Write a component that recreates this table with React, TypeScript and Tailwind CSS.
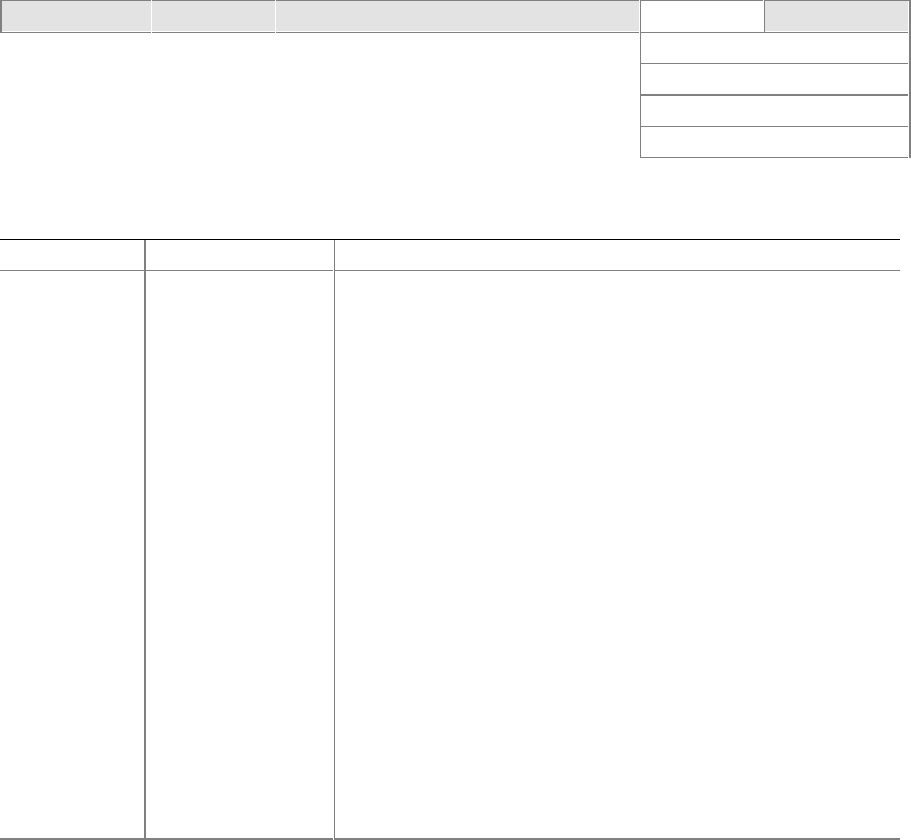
import React from 'react'

const gray = 'border-[#808080]'

function TabCell({ className, children }: { className: string; children?: React.ReactNode }) {
  return (
    <div className={`border-y ${gray} bg-white pb-px ${className}`}>
      <div className="h-[30px] bg-[#e3e3e3]">{children}</div>
    </div>
  )
}

function Column({ className }: { className: string }) {
  return (
    <div className={`flex flex-col ${className}`}>
      <div className={`h-[31px] border-b ${gray}`} />
      <div className={`h-[569px] border-b-2 ${gray}`} />
    </div>
  )
}

export default function App() {
  return (
    <div className="relative h-[840px] w-[911px] bg-white font-['Liberation_Sans',sans-serif]">
      {/* tab bar */}
      <div className="flex items-start gap-px bg-white">
        <TabCell className={`w-[151px] border-l-2`} />
        <TabCell className="w-[123px]" />
        <TabCell className="w-[363px]" />
        <div className={`h-[32px] w-[123px] border-l border-t ${gray} bg-white`} />
        <TabCell className={`w-[147px] border-l border-r-2 pr-px`} />
      </div>

      {/* open dropdown under the active tab */}
      <div className={`absolute left-[640px] top-[32px] w-[271px] border-l border-r-2 ${gray} bg-white pr-px`}>
        <div className={`h-[31px] border-t ${gray}`} />
        <div className={`h-[31px] border-t ${gray}`} />
        <div className={`h-[32px] border-t-2 ${gray}`} />
        <div className={`h-[32px] border-y ${gray}`} />
      </div>

      {/* list table */}
      <div className="mt-[206px] flex w-[900px] border-t border-black">
        <Column className={`w-[146px] border-r-2 ${gray}`} />
        <Column className="mr-px w-[187px]" />
        <Column className={`w-[566px] border-l ${gray}`} />
      </div>
    </div>
  )
}
